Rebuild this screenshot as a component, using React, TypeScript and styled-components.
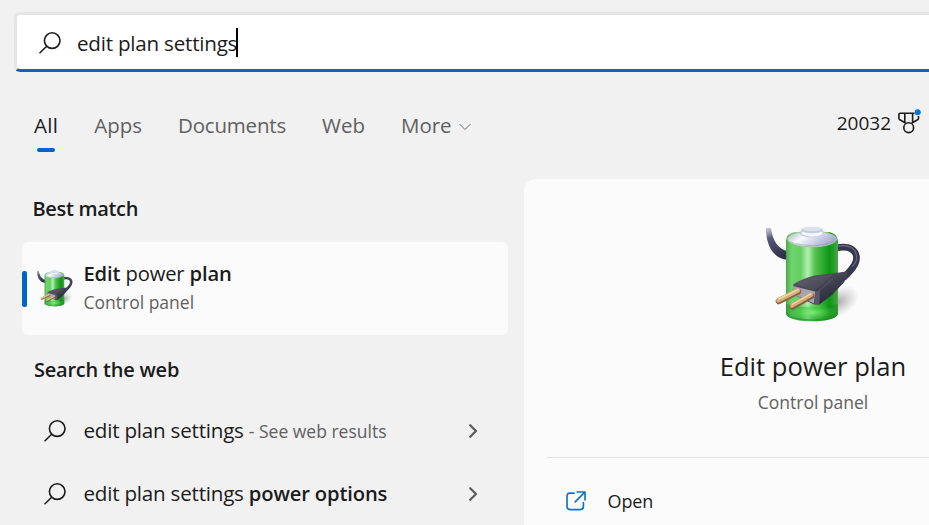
import React from "react";
import styled, { createGlobalStyle } from "styled-components";

const Global = createGlobalStyle`
  * { box-sizing: border-box; }
  body { margin: 0; background: #f1f1f1; overflow: hidden; }
`;

const Page = styled.div`
  width: 100%;
  height: 525px;
  padding-top: 12px;
  display: flex;
  flex-direction: column;
  overflow: hidden;
  background: #f1f1f1;
  color: #1b1b1b;
  font-family: "Open Sans", "Noto Sans", sans-serif;
  font-size: 20.6px;
  letter-spacing: -0.22px;
  white-space: nowrap;
`;

const SearchBox = styled.div`
  flex: none;
  height: 60px;
  margin-left: 14px;
  padding: 1px 0 0 22px;
  display: flex;
  align-items: center;
  background: #fff;
  border: 3px solid #e5e5e5;
  border-right: none;
  border-bottom-color: #0067c0;
  border-radius: 6px 0 0 6px;
`;

const Query = styled.span`
  margin-left: 16px;
  line-height: 28px;
`;

const Caret = styled.span`
  width: 2px;
  height: 29px;
  margin-left: -1px;
  background: #000;
`;

const NavBar = styled.nav`
  flex: none;
  height: 107px;
  padding: 39px 8px 0 34px;
  display: flex;
  align-items: flex-start;
`;

const Tab = styled.div<{ $gap: number; $active?: boolean; $spacing?: number }>`
  margin-right: ${(p) => p.$gap}px;
  display: flex;
  flex-direction: column;
  align-items: center;
  font-size: 20.5px;
  line-height: 28px;
  letter-spacing: ${(p) => p.$spacing ?? 0}px;
  color: ${(p) => (p.$active ? "#1b1b1b" : "#606060")};
`;

const TabLabel = styled.div`
  display: flex;
  align-items: center;
  gap: 7px;
`;

const TabArrow = styled.svg`
  margin-top: 3px;
`;

const ActiveMark = styled.div`
  width: 18px;
  height: 4px;
  margin-top: 9px;
  border-radius: 2px;
  background: #0067c0;
`;

const Rewards = styled.div`
  margin-left: auto;
  margin-top: -2px;
  display: flex;
  align-items: flex-start;
  gap: 6px;
  font-size: 19px;
  line-height: 28px;
  letter-spacing: 0;
`;

const Body = styled.main`
  flex: 1;
  display: grid;
  grid-template-columns: 502px 1fr;
  padding-left: 22px;
  min-height: 0;
`;

const Results = styled.section`
  padding-top: 16px;
  width: 486px;
`;

const Heading = styled.h2<{ $indent: number; $spacing: number }>`
  margin: 0;
  padding-left: ${(p) => p.$indent}px;
  font-size: 20px;
  font-weight: 600;
  line-height: 28px;
  letter-spacing: ${(p) => p.$spacing}px;
`;

const BestMatch = styled.div`
  height: 93px;
  margin: 19px 0 21px;
  display: flex;
  align-items: center;
  background: #fbfbfb;
  border-radius: 6px;
`;

const Accent = styled.div`
  width: 5px;
  height: 36px;
  margin-right: 10px;
  border-radius: 2px;
  background: #0067c0;
`;

const MatchText = styled.div`
  margin: 0 0 2px 10.5px;
  display: flex;
  flex-direction: column;
`;

const MatchTitle = styled.div`
  font-size: 20.2px;
  line-height: 28px;
  letter-spacing: -0.15px;
`;

const Strong = styled.b`
  font-weight: 600;
  font-size: 20.2px;
  letter-spacing: -0.15px;
`;

const Muted = styled.span`
  font-size: 17.5px;
  line-height: 30px;
  letter-spacing: 0;
  color: #606060;
`;

const WebRow = styled.div`
  height: 63px;
  padding: 0 30px 0 22px;
  display: flex;
  align-items: center;
`;

const WebList = styled.div`
  padding-top: 15px;
`;

const WebText = styled.div`
  flex: 1;
  height: 30px;
  margin-left: 17.5px;
  line-height: 28px;
`;

const Details = styled.section`
  min-width: 0;
  height: 346px;
  background: #fbfbfb;
  border-radius: 12px 0 0 0;
  padding: 47px 0 0 23px;
  display: flex;
  flex-direction: column;
`;

const Hero = styled.div`
  width: 532px;
  display: flex;
  flex-direction: column;
  align-items: center;
`;

const HeroTitle = styled.div`
  margin-top: 26px;
  font-size: 25.6px;
  line-height: 36px;
  letter-spacing: 0;
`;

const HeroSub = styled(Muted)`
  margin-top: 2px;
`;

const Divider = styled.div`
  height: 1px;
  margin-top: 40px;
  background: #e2e2e2;
`;

const Action = styled.div`
  margin-top: 28px;
  padding-left: 19px;
  display: flex;
  align-items: center;
  gap: 21.5px;
  font-size: 18px;
  line-height: 30px;
  letter-spacing: -0.1px;
`;

const Icon = styled.svg`
  flex: none;
  display: block;
`;

function SearchIcon() {
  return (
    <Icon width="22" height="22" viewBox="0 0 22 22" fill="none" stroke="#1b1b1b" strokeWidth="1.6" strokeLinecap="round">
      <circle cx="13.2" cy="8.6" r="7.8" />
      <path d="M7.7 14.2 1 20.7" />
    </Icon>
  );
}

function ChevronRight() {
  return (
    <Icon width="10" height="16" viewBox="0 0 10 16" fill="none" stroke="#5c5c5c" strokeWidth="2.3" strokeLinecap="round" strokeLinejoin="round">
      <path d="M2.2 2.2 8 8 2.2 13.8" />
    </Icon>
  );
}

function MedalIcon() {
  return (
    <Icon width="24" height="26" viewBox="0 0 24 26" fill="none" stroke="#1b1b1b" strokeWidth="1.6" strokeLinejoin="round">
      <path d="M17.5 4.3H3.2Q1.9 4.3 1.9 5.6V9.2Q1.9 10.2 2.8 10.7L9 14.2M21.5 7V9.2Q21.5 10.2 20.6 10.7L14.4 14.2M7.8 4.3V13.4M15.6 4.3V13.4" />
      <circle cx="11.7" cy="18.7" r="4.9" />
      <circle cx="20.7" cy="3.3" r="3" fill="#0078d4" stroke="none" />
    </Icon>
  );
}

function OpenIcon() {
  return (
    <Icon width="20" height="20" viewBox="0 0 20 20" fill="none" stroke="#1474c4" strokeWidth="1.7" strokeLinecap="round" strokeLinejoin="round">
      <path d="M8 2.2H4Q1 2.2 1 5.2V15.6Q1 18.6 4 18.6H14.4Q17.4 18.6 17.4 15.6V11.6M11.2 1H19V8.8M18.8 1.2 9.2 10.8" />
    </Icon>
  );
}

function PowerIcon({ id, width, height }: { id: string; width: number; height: number }) {
  const ref = (name: string) => `url(#${id}-${name})`;
  return (
    <Icon width={width} height={height} viewBox="45 33 285 290" preserveAspectRatio="none">
      <defs>
        <linearGradient id={`${id}-body`}>
          <stop offset="0" stopColor="#4aa848" />
          <stop offset="0.1" stopColor="#6fd36c" />
          <stop offset="0.28" stopColor="#65cf63" />
          <stop offset="0.42" stopColor="#b4efb0" />
          <stop offset="0.56" stopColor="#4fc24d" />
          <stop offset="0.84" stopColor="#0f9414" />
          <stop offset="1" stopColor="#47a948" />
        </linearGradient>
        <linearGradient id={`${id}-cap`} x2="1" y2="0.4">
          <stop offset="0" stopColor="#a9b2ba" />
          <stop offset="0.4" stopColor="#f7f9fd" />
          <stop offset="1" stopColor="#a8acd0" />
        </linearGradient>
        <linearGradient id={`${id}-plug`} x2="0.7" y2="1">
          <stop offset="0" stopColor="#666675" />
          <stop offset="0.5" stopColor="#444452" />
          <stop offset="1" stopColor="#25253a" />
        </linearGradient>
        <linearGradient id={`${id}-cord`} x2="0.3" y2="1">
          <stop offset="0" stopColor="#a4a4b8" stopOpacity="0.5" />
          <stop offset="0.35" stopColor="#5a5976" />
          <stop offset="1" stopColor="#302f4c" />
        </linearGradient>
        <radialGradient id={`${id}-glow`}>
          <stop offset="0" stopColor="#7bf476" stopOpacity="0.9" />
          <stop offset="1" stopColor="#5bdc58" stopOpacity="0" />
        </radialGradient>
        <radialGradient id={`${id}-shade`}>
          <stop offset="0" stopColor="#777" stopOpacity="0.6" />
          <stop offset="1" stopColor="#999" stopOpacity="0" />
        </radialGradient>
      </defs>
      <ellipse cx="262" cy="260" rx="66" ry="42" fill={ref("shade")} transform="rotate(-28 262 260)" />
      <path d="M44 38 60 40C65 78 80 100 112 110L109 134C68 130 46 95 44 38Z" fill={ref("cord")} />
      <path d="M256 98C282 94 300 95 312 112 325 135 310 157 277 188" fill="none" stroke="#37364f" strokeWidth="20" />
      <path d="M258 94C285 89 302 94 312 108 321 125 316 142 304 155" fill="none" stroke="#66657d" strokeWidth="4" />
      <path d="M105 76Q106 57 128 52H237Q258 57 261 76V296C259 309 224 318 183 318S107 309 105 296Z" fill={ref("body")} />
      <path d="M105 266Q183 286 261 266V296C259 309 224 318 183 318S107 309 105 296Z" fill="#0f8a15" opacity="0.4" />
      <ellipse cx="184" cy="291" rx="72" ry="26" fill={ref("glow")} />
      <path d="M108 294C112 321 254 321 258 294" fill="none" stroke="#2e8b34" strokeWidth="4" opacity="0.7" />
      <ellipse cx="183" cy="72" rx="73" ry="23" fill={ref("cap")} stroke="#a8c8aa" strokeWidth="3" />
      <path d="M116 77C130 97 236 97 250 77L238 83Q183 97 129 83Z" fill="#7d829f" opacity="0.45" />
      <path d="M152 42C158 34 208 34 214 42L220 57C207 71 159 71 146 57Z" fill="#c5cedf" />
      <ellipse cx="183" cy="42" rx="28" ry="6" fill="#dce3ec" />
      <path d="M154 50Q183 59 213 50L215 58Q183 72 152 58Z" fill="#f4f8fd" />
      <path d="M127 207C145 195 166 188 190 181L246 174C264 171 278 173 290 166L287 188C278 207 261 219 245 238L205 268 188 267 128 238Z" fill={ref("plug")} />
      <path d="M131 207C154 193 185 183 246 178L219 202 191 225Z" fill="#636370" opacity="0.3" />
      <path d="M127 213 193 229 189 265 127 237Z" fill="#a7a5b2" />
      <path d="M193 229 207 225 205 267 189 266Z" fill="#57566a" />
      <path d="M206 225 246 190" stroke="#777683" strokeWidth="3" opacity="0.4" />
      <g strokeLinecap="round" fill="none">
        <path d="M83 258 142 229" stroke="#8c6546" strokeWidth="18" />
        <path d="M82 255 141 226" stroke="#d9b17f" strokeWidth="13" />
        <path d="M84 251 141 223" stroke="#f3d9ad" strokeWidth="4" />
        <path d="M124 274 181 242" stroke="#805c42" strokeWidth="18" />
        <path d="M123 271 180 239" stroke="#d7ab76" strokeWidth="13" />
        <path d="M124 267 179 236" stroke="#f3d9ad" strokeWidth="4" />
      </g>
    </Icon>
  );
}

export default function App() {
  return (
    <Page>
      <Global />
      <SearchBox>
        <SearchIcon />
        <Query>edit plan settings</Query>
        <Caret />
      </SearchBox>
      <NavBar>
        <Tab $gap={36} $active $spacing={0.3}>
          All
          <ActiveMark />
        </Tab>
        <Tab $gap={36}>Apps</Tab>
        <Tab $gap={36} $spacing={-0.2}>Documents</Tab>
        <Tab $gap={36}>Web</Tab>
        <Tab $gap={0}>
          <TabLabel>
            More
            <TabArrow width="12" height="8" viewBox="0 0 12 8" fill="none" stroke="#6c6c6c" strokeWidth="1">
              <path d="M0.5 1 6 6.5 11.5 1" />
            </TabArrow>
          </TabLabel>
        </Tab>
        <Rewards>
          20032
          <MedalIcon />
        </Rewards>
      </NavBar>
      <Body>
        <Results>
          <Heading $indent={10.5} $spacing={-0.32}>Best match</Heading>
          <BestMatch>
            <Accent />
            <PowerIcon id="small" width={36} height={37} />
            <MatchText>
              <MatchTitle>
                <Strong>Edit</Strong> power <Strong>plan</Strong>
              </MatchTitle>
              <Muted>Control panel</Muted>
            </MatchText>
          </BestMatch>
          <Heading $indent={12} $spacing={-0.22}>Search the web</Heading>
          <WebList>
            <WebRow>
              <SearchIcon />
              <WebText>
                edit plan settings <Muted>- See web results</Muted>
              </WebText>
              <ChevronRight />
            </WebRow>
            <WebRow>
              <SearchIcon />
              <WebText>
                edit plan settings <Strong>power options</Strong>
              </WebText>
              <ChevronRight />
            </WebRow>
          </WebList>
        </Results>
        <Details>
          <Hero>
            <PowerIcon id="large" width={95} height={97} />
            <HeroTitle>Edit power plan</HeroTitle>
            <HeroSub>Control panel</HeroSub>
          </Hero>
          <Divider />
          <Action>
            <OpenIcon />
            Open
          </Action>
        </Details>
      </Body>
    </Page>
  );
}
